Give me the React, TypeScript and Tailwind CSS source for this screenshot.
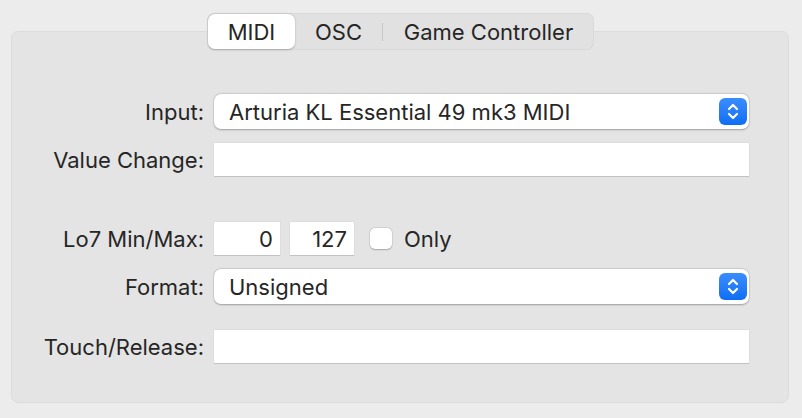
import React from "react"

const font = { fontFamily: "Inter, 'Liberation Sans', sans-serif" }

function Stepper() {
  return (
    <div className="absolute right-[2px] top-[4px] w-[28px] h-[27px] rounded-[6px] bg-gradient-to-b from-[#3b8dfd] to-[#0b6ef4] flex items-center justify-center">
      <svg width="14" height="19" viewBox="0 0 14 19" fill="none">
        <path d="M3 7 L7 3 L11 7" stroke="white" strokeWidth="2.2" strokeLinecap="round" strokeLinejoin="round" />
        <path d="M3 12 L7 16 L11 12" stroke="white" strokeWidth="2.2" strokeLinecap="round" strokeLinejoin="round" />
      </svg>
    </div>
  )
}

function Popup({ value }: { value: string }) {
  return (
    <div className="relative w-[535px] h-[35px] bg-white rounded-[7px] shadow-[0_0.5px_2px_rgba(0,0,0,0.28),0_0_0_0.5px_rgba(0,0,0,0.08)] flex items-center pl-[15px]">
      <span className="text-[22px] text-[#262626] leading-none">{value}</span>
      <Stepper />
    </div>
  )
}

function Field({ value, w = "w-[535px]" }: { value?: string; w?: string }) {
  return (
    <div className={`${w} h-[33px] bg-white shadow-[0_1px_0_#c2c2c2,0_0_0_0.5px_#d6d6d6] flex items-center justify-end pr-[7px]`}>
      {value && <span className="text-[22px] text-[#262626] leading-none">{value}</span>}
    </div>
  )
}

function Row({ label, children, className = "" }: { label: string; children: React.ReactNode; className?: string }) {
  return (
    <div className={`flex items-center ${className}`}>
      <div className="w-[192px] text-right text-[22px] text-[#262626] leading-none">{label}</div>
      <div className="ml-[10px] flex items-center">{children}</div>
    </div>
  )
}

export default function App() {
  return (
    <div className="w-[802px] h-[418px] bg-[#ececec] relative overflow-hidden" style={font}>
      <div className="pt-[31px] pl-[11px]">
        <div className="w-[778px] h-[372px] rounded-[7px] bg-[#e4e4e4] border border-[#dcdcdc] pt-[62px]">
          <Row label="Input:">
            <Popup value="Arturia KL Essential 49 mk3 MIDI" />
          </Row>
          <Row label="Value Change:" className="mt-[14px]">
            <Field />
          </Row>
          <Row label="Lo7 Min/Max:" className="mt-[46px]">
            <Field value="0" w="w-[66px]" />
            <div className="ml-[10px]">
              <Field value="127" w="w-[64px]" />
            </div>
            <div className="ml-[16px] w-[22px] h-[21px] rounded-[5px] bg-white shadow-[0_0.5px_1.5px_rgba(0,0,0,0.25),0_0_0_0.5px_rgba(0,0,0,0.08)]" />
            <span className="ml-[12px] text-[22px] text-[#262626] leading-none">Only</span>
          </Row>
          <Row label="Format:" className="mt-[14px]">
            <Popup value="Unsigned" />
          </Row>
          <Row label="Touch/Release:" className="mt-[26px]">
            <Field />
          </Row>
        </div>
      </div>

      {/* segmented control overlapping the box edge */}
      <div className="absolute left-[207px] top-[13px] w-[387px] h-[37px] rounded-[8px] bg-[#e1e1e1] shadow-[inset_0_0_0_0.5px_rgba(0,0,0,0.07)] flex items-center text-[22px] text-[#262626] leading-none">
        <div className="w-[87px] h-[35px] ml-[1px] rounded-[7px] bg-white shadow-[0_0.5px_2px_rgba(0,0,0,0.25)] flex items-center justify-center">MIDI</div>
        <div className="w-[87px] flex items-center justify-center">OSC</div>
        <div className="w-px h-[18px] bg-[#c8c8c8]" />
        <div className="flex-1 flex items-center justify-center">Game Controller</div>
      </div>
    </div>
  )
}
